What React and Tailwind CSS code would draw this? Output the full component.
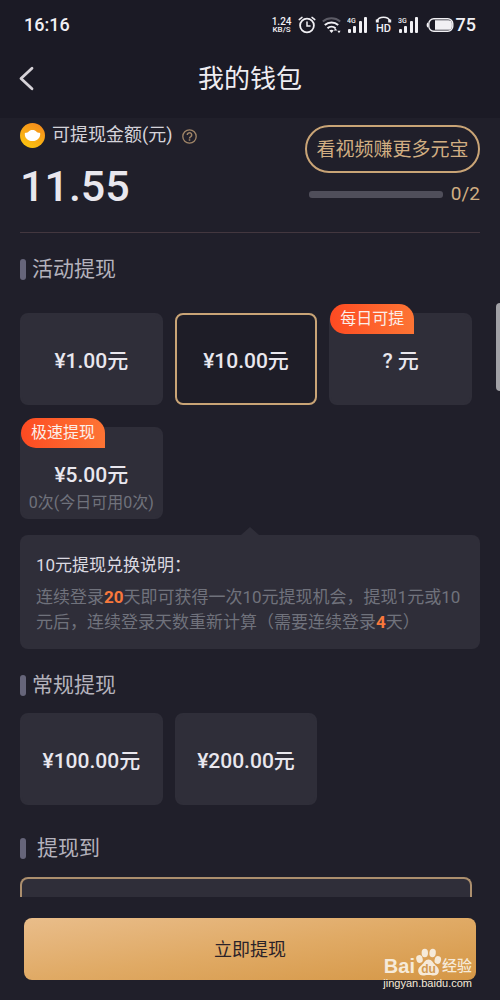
import React from "react";

function SignalIcon({ label }) {
  return (
    <svg width="22" height="18" viewBox="0 0 22 18" fill="#f1f0f4" aria-hidden="true">
      <text x="0" y="7" fontSize="7" fontWeight="500" fontFamily="Roboto, sans-serif">
        {label}
      </text>
      <rect x="1" y="13" width="3" height="4" rx="1" />
      <rect x="6" y="10" width="3" height="7" rx="1" />
      <rect x="12" y="5" width="3" height="12" rx="1" />
      <rect x="17" y="1" width="3" height="16" rx="1" />
    </svg>
  );
}

function StatusBar() {
  return (
    <div className="flex h-[50px] items-center justify-between pl-6 pr-6 text-[#f1f0f4]">
      <span className="text-[18px] font-medium leading-6">16:16</span>
      <div className="flex items-center gap-[6px]">
        <div className="flex flex-col text-center font-medium">
          <span className="text-[10px] leading-[9px]">1.24</span>
          <span className="text-[8px] leading-[8px]">KB/S</span>
        </div>
        <svg width="18" height="18" viewBox="0 0 18 18" fill="none" stroke="#f1f0f4" strokeWidth="1.8" strokeLinecap="round" aria-hidden="true">
          <circle cx="9" cy="9.5" r="6.9" />
          <path d="M9 6v4h3M1.2 3.6 4 1.4M16.8 3.6 14 1.4" strokeWidth="1.5" />
        </svg>
        <svg width="19" height="18" viewBox="0 0 19 18" fill="none" stroke="#f1f0f4" strokeWidth="2" aria-hidden="true">
          <path d="M.8 5.400a13.500 13.500 0 0 1 17.400 0" stroke="#5d5c66" />
          <path d="M2.800 9a10 10 0 0 1 13.400 0M5.500 12.200a6 6 0 0 1 8 0" />
          <path d="M7.300 14.600a3.500 3.500 0 0 1 4.400 0L9.500 17Z" fill="#f1f0f4" stroke="none" />
          <path d="m13.500 12 1.600 2.500h-3.200ZM17 17.200l-1.600-2.500h3.200Z" fill="#f1f0f4" stroke="none" />
        </svg>
        <SignalIcon label="4G" />
        <svg width="17" height="20" viewBox="0 0 17 20" className="overflow-visible" aria-hidden="true">
          <path d="M2 6C4 1 13 1 15 6" fill="none" stroke="#f1f0f4" strokeWidth="1.7" />
          <path d="M.8 4.500h3v3h-3zM13.200 4.500h3v3h-3z" fill="#f1f0f4" />
          <text x="8.500" y="17" textAnchor="middle" fontSize="11" fontWeight="500" fontFamily="Roboto, sans-serif" fill="#f1f0f4">
            HD
          </text>
        </svg>
        <SignalIcon label="3G" />
        <div className="flex items-center gap-[2px]">
          <svg width="28" height="16" viewBox="0 0 28 16" aria-hidden="true">
            <rect x="2.800" y="1.800" width="24" height="12.400" rx="5" fill="none" stroke="#f1f0f4" strokeWidth="1.400" />
            <path d="M2 5.500v5C.2 10.500.2 5.500 2 5.500Z" fill="#f1f0f4" />
            <path d="M9 3.200h13.500a3.400 3.400 0 0 1 3.400 3.400v2.800a3.400 3.400 0 0 1-3.400 3.400H9Z" fill="#f1f0f4" />
          </svg>
          <span className="text-[18px] font-medium leading-6">75</span>
        </div>
      </div>
    </div>
  );
}

function SectionTitle({ children, wide = false }) {
  return (
    <h2 className={`flex h-6 items-center text-[21px] leading-6 text-[#b4b2bc] ${wide ? "gap-[11px]" : "gap-[6px]"}`}>
      <span className="h-[21px] w-[6px] rounded-[3px] bg-[#66657a]" />
      {children}
    </h2>
  );
}

function AmountCard({ amount, tag, note, selected = false }) {
  return (
    <button
      type="button"
      aria-pressed={selected}
      className={`relative flex h-[92px] flex-col items-center rounded-lg text-[#e9e7ee] ${
        selected ? "border-2 border-[#c9a476] bg-[#1e1d27]" : "border-2 border-[#2f2e39] bg-[#2f2e39]"
      } ${note ? "justify-end" : "justify-center pt-1"}`}
    >
      {tag && (
        <span className="absolute -left-px -top-[11px] flex h-[30px] items-center rounded-l-[15px] rounded-tr-[15px] bg-linear-to-r from-[#fd4a22] to-[#fd7434] px-[10px] text-[16px] text-[#fbeee9]">
          {tag}
        </span>
      )}
      <span className="whitespace-pre text-[21px] font-medium leading-7">{amount}</span>
      {note && <span className="whitespace-nowrap text-[16px] leading-7 text-[#70727c]">{note}</span>}
    </button>
  );
}

function Watermark() {
  return (
    <div className="pointer-events-none absolute bottom-[10px] right-7 flex flex-col items-end font-['Liberation_Sans','Noto_Sans_CJK_SC',sans-serif] text-[#f6ead9]">
      <div className="flex items-end">
        <span className="text-[20px] font-bold leading-5">Bai</span>
        <svg width="27" height="28" viewBox="0 0 27 28" aria-hidden="true">
          <g fill="#f6ead9">
            <ellipse cx="4.500" cy="11" rx="3.200" ry="4" transform="rotate(-15 4.500 11)" />
            <ellipse cx="9.800" cy="5" rx="3.200" ry="4.200" />
            <ellipse cx="17.600" cy="5" rx="3.200" ry="4.200" transform="rotate(8 17.600 5)" />
            <ellipse cx="22.800" cy="12" rx="3.200" ry="4" transform="rotate(15 22.800 12)" />
            <path d="M13.500 11.500c3.500 0 4.500 3.500 7 5.700 2.500 2.200 4 4 3.200 7-.8 3-3.500 3.500-6 3.200-2.800-.4-5.600-.4-8.400 0-3 .4-5.300-.6-6-3.500-.7-3 .8-4.700 3.200-6.700 2.500-2.200 3.500-5.700 7-5.700Z" />
          </g>
          <text x="13.500" y="25" textAnchor="middle" fontSize="12" fontWeight="700" fontFamily="Liberation Sans, sans-serif" fill="#d29a50">
            du
          </text>
        </svg>
        <span className="text-[15px] font-medium leading-5">经验</span>
      </div>
      <span className="text-[11px] leading-[14px]">jingyan.baidu.com</span>
    </div>
  );
}

export default function App() {
  return (
    <div className="relative flex min-h-screen flex-col bg-[#201f2a] font-['Roboto','Noto_Sans_CJK_SC',sans-serif]">
      <header className="bg-[#1b1a25] pb-[10px]">
        <StatusBar />
        <nav className="grid h-[58px] grid-cols-[1fr_auto_1fr] items-center px-4">
          <button type="button" aria-label="返回" className="w-6">
            <svg width="24" height="28" viewBox="0 0 24 28" fill="none" stroke="#d6d2d8" strokeWidth="2.800" strokeLinecap="round" strokeLinejoin="round" aria-hidden="true">
              <path d="M16 3.200 5 13.500l11 10.300" />
            </svg>
          </button>
          <h1 className="text-[26px] leading-8 text-[#efedf2]">我的钱包</h1>
        </nav>
      </header>

      <main className="flex-1 px-5">
        <section className="flex h-[115px] justify-between border-b border-[#43373f]">
          <div className="flex flex-col pt-1">
            <div className="flex h-[26px] items-center">
              <svg width="25" height="25" viewBox="0 0 25 25" aria-hidden="true">
                <defs>
                  <linearGradient id="coin" x1="0.800" y1="0" x2="0.300" y2="1">
                    <stop offset="0" stopColor="#f58a1c" />
                    <stop offset="1" stopColor="#fcc40f" />
                  </linearGradient>
                </defs>
                <circle cx="12.500" cy="12.500" r="12.500" fill="url(#coin)" />
                <path d="M4.800 10.200c1-.9 2.200-.4 3.200-1 1.200-1.700 2.700-2.200 4.500-2.200s3.300.5 4.500 2.200c1 .6 2.200.1 3.200 1 .3 4.600-2.700 7.800-7.700 7.800s-8-3.200-7.700-7.800Z" fill="#fff" />
              </svg>
              <span className="ml-[7px] text-[18px] leading-6 text-[#d5d3da]">可提现金额(元)</span>
              <button type="button" aria-label="说明" className="ml-[10px] mt-[2px]">
                <svg width="15" height="15" viewBox="0 0 15 15" fill="none" stroke="#a08568" strokeWidth="1.300" aria-hidden="true">
                  <circle cx="7.500" cy="7.500" r="6.700" />
                  <path d="M5.300 6a2.200 2.200 0 1 1 3.500 1.700c-.9.600-1.300.9-1.300 1.800M7.500 10.300v1.500" strokeWidth="1.500" />
                </svg>
              </button>
            </div>
            <p className="pt-3 text-[43px] font-medium leading-[52px] text-[#e9e7ee]">11.55</p>
          </div>
          <div className="flex w-[175px] flex-col pt-[7px]">
            <button type="button" className="h-12 rounded-full border-2 border-[#c9a476] pt-[2px] text-[19px] leading-6 text-[#d1ae82]">
              看视频赚更多元宝
            </button>
            <div className="flex items-center gap-2 pl-1 pt-[9px]">
              <div role="progressbar" aria-valuenow={0} aria-valuemax={2} aria-label="看视频进度" className="h-[7px] flex-1 rounded-[3px] bg-[#4f4e5a]" />
              <span className="text-[19px] leading-6 text-[#d1ae82]">0/2</span>
            </div>
          </div>
        </section>

        <section className="pt-6">
          <SectionTitle>活动提现</SectionTitle>
          <div className="mr-2 mt-8 grid grid-cols-3 gap-x-3 gap-y-[22px]">
            <AmountCard amount="¥1.00元" />
            <AmountCard amount="¥10.00元" selected />
            <AmountCard amount="? 元" tag="每日可提" />
            <AmountCard amount="¥5.00元" tag="极速提现" note="0次(今日可用0次)" />
          </div>
          <div className="relative mt-4 rounded-lg bg-[#2f2e39] px-4 pb-[14px] pt-4">
            <svg className="absolute -top-2 left-1/2 -translate-x-1/2" width="18" height="8" viewBox="0 0 18 8" aria-hidden="true">
              <path d="M0 8 9 0l9 8Z" fill="#2f2e39" />
            </svg>
            <h3 className="text-[17px] leading-7 text-[#dbd9e0]">10元提现兑换说明：</h3>
            <p className="mt-[6px] text-[17px] leading-[25px] text-[#70727c]">
              连续登录<strong className="font-bold text-[#f8783c]">20</strong>天即可获得一次10元提现机会，提现1元或10元后，连续登录天数重新计算（需要连续登录
              <strong className="font-bold text-[#f8783c]">4</strong>天）
            </p>
          </div>
        </section>

        <section className="pt-6">
          <SectionTitle>常规提现</SectionTitle>
          <div className="mr-2 mt-4 grid grid-cols-3 gap-x-3">
            <AmountCard amount="¥100.00元" />
            <AmountCard amount="¥200.00元" />
          </div>
        </section>

        <section className="pt-[31px]">
          <SectionTitle wide>提现到</SectionTitle>
          <div className="mr-2 mt-[17px] h-5 rounded-t-lg border-2 border-b-0 border-[#ac8f6e] bg-[#2f2e39]" />
        </section>
      </main>

      <footer className="relative px-6 pb-5 pt-[21px]">
        <button type="button" className="h-[62px] w-full rounded-lg bg-linear-to-br from-[#e9bd8a] via-[#e0aa65] to-[#d59745] text-[18px] text-[#2a2229]">
          立即提现
        </button>
        <Watermark />
      </footer>

      <div className="absolute right-0 top-[303px] h-[88px] w-1 rounded-l bg-[#a2a2a7]" />
    </div>
  );
}
